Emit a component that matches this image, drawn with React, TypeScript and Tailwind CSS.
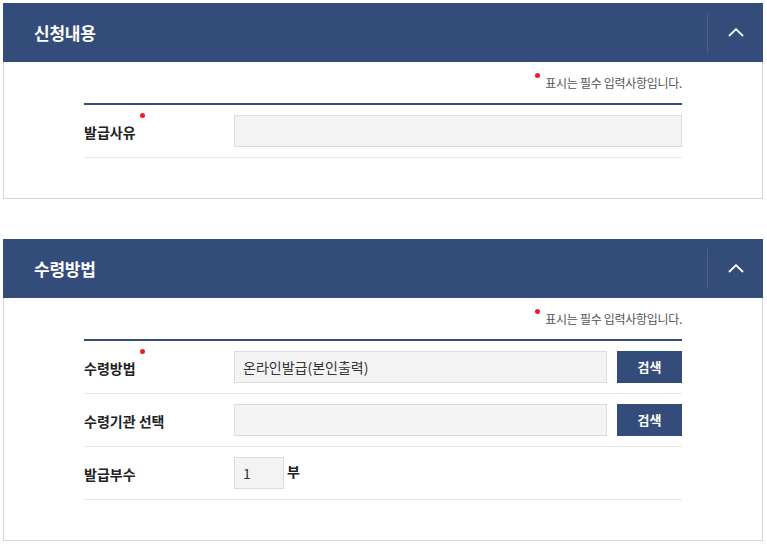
import React from "react";

const Dot = ({ className }: { className: string }) => (
  <span className={`absolute w-[5px] h-[5px] rounded-full bg-[#ee1c25] ${className}`} />
);

const Chevron = () => (
  <svg width="16" height="9" viewBox="0 0 16 9" fill="none">
    <polyline points="1,8 8,1.2 15,8" stroke="#ffffff" strokeWidth="1.8" strokeLinejoin="miter" />
  </svg>
);

const Label = ({ text, required }: { text: string; required?: boolean }) => (
  <div className="w-[150px] shrink-0">
    <span className="relative text-[14px] leading-[20px] font-bold tracking-[0px] text-[#222]">
      {text}
      {required && <Dot className="-right-[9px] -top-[9px]" />}
    </span>
  </div>
);

const Row = ({ children }: { children: React.ReactNode }) => (
  <div className="flex items-center py-[10px] border-b border-[#e8e8e8]">{children}</div>
);

const Field = ({ value, className }: { value?: string; className: string }) => (
  <div
    className={`h-[32px] bg-[#f3f3f3] border border-[#dcdcdc] flex items-center px-[8px] text-[14px] tracking-[0px] text-[#333] ${className}`}
  >
    {value}
  </div>
);

const SearchButton = () => (
  <button className="ml-[10px] w-[65px] h-[32px] bg-[#344c79] text-white text-[13px] font-bold">
    검색
  </button>
);

const Panel = ({ title, children }: { title: string; children: React.ReactNode }) => (
  <section>
    <div className="h-[59px] bg-[#344c79] flex items-center">
      <h2 className="flex-1 pl-[31px] text-white text-[17px] font-bold tracking-[-0.25px]">{title}</h2>
      <div className="w-[56px] h-[40px] border-l border-[#4c628d] flex items-center justify-center">
        <Chevron />
      </div>
    </div>
    <div className="border-x border-b border-[#d6d6d6] px-[80px] pb-[40px]">
      <div className="h-[41px] flex items-center justify-end">
        <span className="relative text-[12px] tracking-[-0.3px] text-[#555]">
          <Dot className="-left-[10px] -top-[1px]" />
          표시는 필수 입력사항입니다.
        </span>
      </div>
      <div className="border-t-2 border-[#344c79]">{children}</div>
    </div>
  </section>
);

export default function App() {
  return (
    <div className="w-[767px] min-h-[547px] bg-white pl-[3px] pr-[4px] pt-[3px] font-['Noto_Sans_CJK_KR',sans-serif]">
      <Panel title="신청내용">
        <Row>
          <Label text="발급사유" required />
          <Field className="flex-1" />
        </Row>
      </Panel>
      <div className="h-[40px]" />
      <Panel title="수령방법">
        <Row>
          <Label text="수령방법" required />
          <Field className="flex-1" value="온라인발급(본인출력)" />
          <SearchButton />
        </Row>
        <Row>
          <Label text="수령기관 선택" />
          <Field className="flex-1" />
          <SearchButton />
        </Row>
        <Row>
          <Label text="발급부수" />
          <Field className="w-[50px]" value="1" />
          <span className="ml-[3px] -mt-[4px] text-[14px] font-bold text-[#222]">부</span>
        </Row>
      </Panel>
    </div>
  );
}
